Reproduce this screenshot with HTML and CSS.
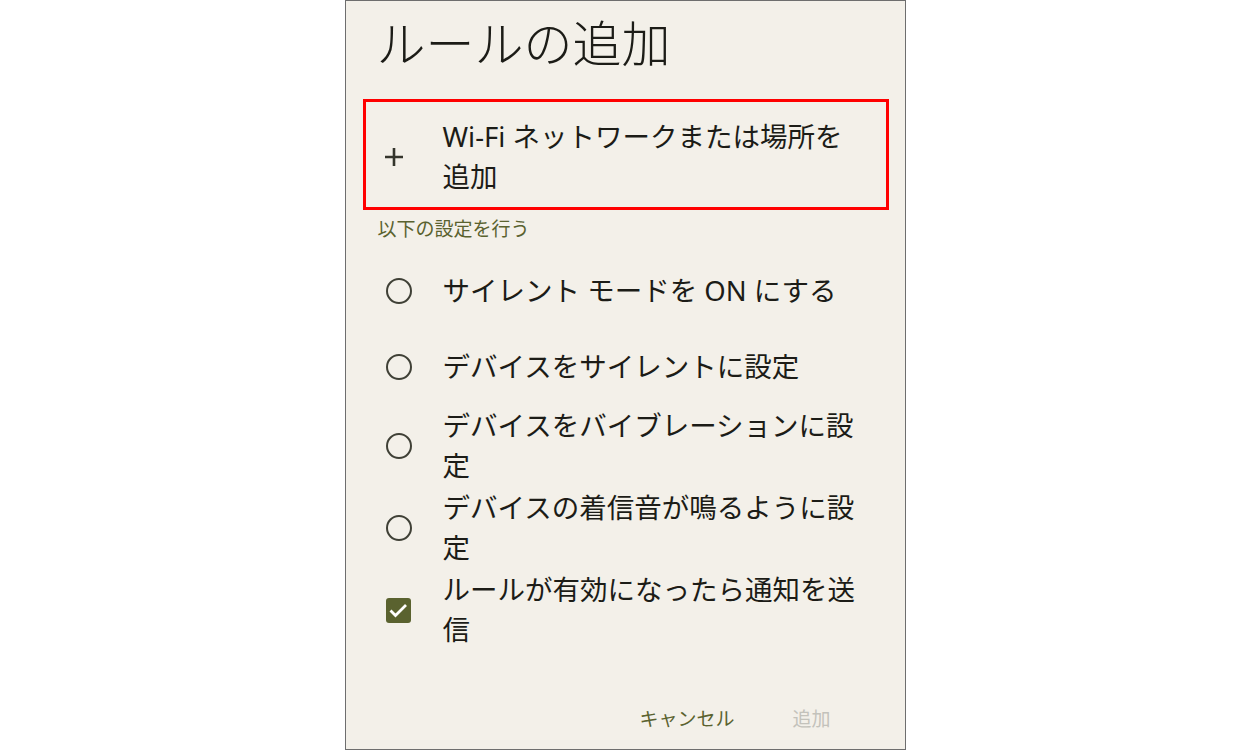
FILE: index.html
```html
<!DOCTYPE html>
<html lang="ja">
<head>
  <meta charset="UTF-8" />
  <meta name="viewport" content="width=device-width, initial-scale=1.0"/>
  <title>ルールの追加</title>
  <link rel="stylesheet" href="styles.css">
</head>
<body>
  <div class="dialog">
    <h1 class="dialog-title">ルールの追加</h1>

    <div class="add-row">
      <span class="add-icon">
        <svg width="20" height="20" viewBox="0 0 20 20"><path d="M10 1v18M1 10h18" stroke="#34352c" stroke-width="2.6" fill="none"/></svg>
      </span>
      <span class="add-text">Wi-Fi ネットワークまたは場所を追加</span>
    </div>

    <p class="section-label">以下の設定を行う</p>

    <ul class="option-list">
      <li class="option">
        <span class="option-icon"><span class="radio"></span></span>
        <span class="option-text">サイレント モードを ON にする</span>
      </li>
      <li class="option">
        <span class="option-icon"><span class="radio"></span></span>
        <span class="option-text">デバイスをサイレントに設定</span>
      </li>
      <li class="option">
        <span class="option-icon"><span class="radio"></span></span>
        <span class="option-text">デバイスをバイブレーションに設定</span>
      </li>
      <li class="option">
        <span class="option-icon"><span class="radio"></span></span>
        <span class="option-text">デバイスの着信音が鳴るように設定</span>
      </li>
      <li class="option">
        <span class="option-icon">
          <span class="checkbox">
            <svg width="25" height="25" viewBox="0 0 25 25"><path d="M4.5 12.5l5 5 10.5-10.5" stroke="#fff" stroke-width="2.8" fill="none"/></svg>
          </span>
        </span>
        <span class="option-text">ルールが有効になったら通知を送信</span>
      </li>
    </ul>

    <div class="dialog-actions">
      <button class="action-button">キャンセル</button>
      <button class="action-button disabled">追加</button>
    </div>
  </div>
</body>
</html>
```

FILE: styles.css
```css
* { margin: 0; padding: 0; box-sizing: border-box; }

:root {
  --bg: #f3f0e9;
  --text: #1c1c17;
  --olive: #5a622f;
  --icon: #3f4036;
  --muted: #c3c2bb;
}

body {
  font-family: "Noto Sans", "Noto Sans CJK JP", sans-serif;
  background: #fff;
  display: flex;
  justify-content: center;
}

.dialog {
  width: 561px;
  height: 750px;
  background: var(--bg);
  border: 1px solid #6e6e6e;
  display: flex;
  flex-direction: column;
  color: var(--text);
}

.dialog-title {
  font-size: 49px;
  font-weight: 300;
  line-height: 58px;
  padding: 13px 0 0 31px;
}

.add-row {
  margin: 27px 16px 0 17px;
  border: 3px solid #f00;
  padding: 15px 25px 10px 14px;
  display: flex;
  align-items: center;
}

.add-icon {
  width: 28px;
  flex-shrink: 0;
  display: flex;
  justify-content: center;
  margin-right: 35px;
}

.add-text {
  font-size: 27.5px;
  line-height: 40px;
}

.section-label {
  margin: 7px 0 0 32px;
  font-size: 19px;
  line-height: 24px;
  color: var(--olive);
}

.option-list {
  list-style: none;
  margin-top: 12px;
}

.option {
  min-height: 76px;
  padding: 1px 41px 1px 32px;
  display: flex;
  align-items: center;
}

.option-icon {
  width: 42px;
  flex-shrink: 0;
  display: flex;
  justify-content: center;
  margin-right: 23px;
}

.radio {
  width: 26px;
  height: 26px;
  border: 2.8px solid var(--icon);
  border-radius: 50%;
}

.checkbox {
  width: 25px;
  height: 25px;
  background: var(--olive);
  border-radius: 3px;
  display: flex;
}

.option-text {
  font-size: 27.5px;
  line-height: 40px;
}

.dialog-actions {
  margin-top: auto;
  display: flex;
  justify-content: flex-end;
  gap: 58px;
  padding: 0 74px 10px 0;
}

.action-button {
  background: none;
  border: none;
  font-family: inherit;
  font-size: 19px;
  line-height: 40px;
  color: var(--olive);
}

.action-button.disabled {
  color: var(--muted);
}
```
